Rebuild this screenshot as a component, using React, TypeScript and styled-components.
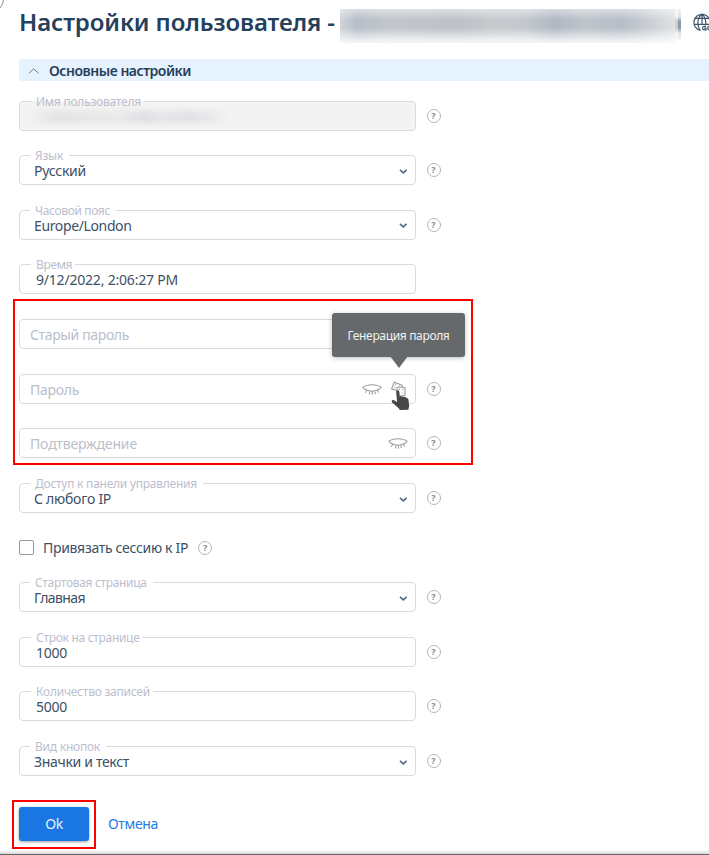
import React from "react";
import styled, { createGlobalStyle, css } from "styled-components";

const GlobalStyle = createGlobalStyle`
  * { box-sizing: border-box; }
  body { margin: 0; background: #fff; overflow: hidden; }
`;

const Page = styled.main`
  position: relative;
  display: flex;
  flex-direction: column;
  height: 855px;
  padding: 9px 0 0 19px;
  overflow: hidden;
  background: #fff;
  color: #3c5066;
  font: 400 14px/20px "Noto Sans", "Open Sans", sans-serif;
`;

const CornerRing = styled.span`
  position: absolute;
  left: -21px;
  top: -13px;
  width: 25px;
  height: 25px;
  border: 1px solid #8b8b8b;
  border-radius: 50%;
`;

const BottomEdge = styled.span`
  position: absolute;
  left: 0;
  right: 0;
  bottom: 0;
  height: 5px;
  border-bottom: 1px solid #626262;
  background: linear-gradient(#fff, #d8d8d8);
`;

const Text = styled.span<{ $track?: number }>`
  letter-spacing: ${(p) => p.$track ?? -0.3}px;
  white-space: pre;
`;

const Header = styled.header`
  display: flex;
  height: 34px;
  width: 690px;
  flex: none;
`;

const Title = styled.h1`
  margin: -1px 0 0;
  width: 321px;
  flex: none;
  color: #24405a;
  font-size: 24px;
  font-weight: 600;
  line-height: 28px;
`;

const HiddenName = styled.span`
  width: 335px;
  height: 34px;
  flex: none;
  background:
    linear-gradient(#fff7 0, #fff0 32%, #fff0 55%, #fffc 95%),
    linear-gradient(90deg, #d0d4d9, #b7bec8 5%, #c2c7cd 14%, #bfc4ca 25%, #bdc2c8 36%, #c5cace 45%, #c4c9cf 55%, #b0b8c3 64%, #bec4cb 73%, #b7bec8 84%, #c9ced3 92%, #dfe2e5);
`;

const HiddenTail = styled.span`
  width: 6px;
  height: 31px;
  flex: none;
  background:
    linear-gradient(90deg, #fff8 50%, #fff0 50%),
    linear-gradient(#eff0f1, #e2e5e7 25%, #8c99a7 40%, #8c99a7 60%, #e3e6e8 78%, #f3f3f3);
`;

const GlobeSlot = styled.span`
  margin: 4px 0 0 12px;
  width: 20px;
  height: 20px;
  flex: none;
`;

const SectionBar = styled.button`
  display: flex;
  align-items: center;
  gap: 9px;
  flex: none;
  height: 22px;
  margin: 16px 0 19.6px;
  padding: 1px 0 0 9px;
  border: 0;
  border-radius: 2px 0 0 2px;
  background: #e7f2ff;
  color: #253f59;
  font: 600 14px/21px "Noto Sans", sans-serif;
`;

const Row = styled.div`
  display: flex;
  align-items: center;
  gap: 10.5px;
  height: 30px;
  flex: none;
  & + & { margin-top: 24.6px; }
`;

const Control = styled.div<{ $disabled?: boolean; $select?: boolean }>`
  position: relative;
  display: flex;
  align-items: center;
  width: 397px;
  height: 30px;
  padding: 2px 7px 0 ${(p) => (p.$select ? 14 : 16)}px;
  border: 1px solid #d8dadb;
  border-radius: 4px;
  background: ${(p) => (p.$disabled ? "#f3f3f3" : "#fff")};
`;

const FloatLabel = styled.label<{ $disabled?: boolean; $select?: boolean }>`
  position: absolute;
  left: ${(p) => (p.$select ? 10 : 11)}px;
  top: -8px;
  padding: 0 ${(p) => (p.$select ? 6 : 3)}px 0 5px;
  color: #bbbecd;
  font-size: 12px;
  line-height: 15px;
  background: ${(p) => (p.$disabled ? "linear-gradient(#fff 50%, #f3f3f3 50%)" : "#fff")};
`;

const Placeholder = styled.span`
  margin-left: -6px;
  color: #bbbecb;
`;

const Blurred = styled.span`
  width: 197px;
  height: 20px;
  margin: 1px 0 0 -5px;
  background: linear-gradient(90deg, #f1f1f2, #e3e4e6 12%, #e8e8ea 30%, #e9eaeb 44%, #e0e1e4 58%, #e6e7e9 66%, #e2e3e6 80%, #eaeaec 93%, #f2f2f2);
  mask-image: linear-gradient(transparent, #000 35%, #000 65%, transparent);
`;

const Trailing = styled.span`
  display: flex;
  align-items: center;
  gap: 8px;
  margin: 0 0 0 auto;
`;

const HelpMark = styled.span`
  display: flex;
  align-items: center;
  justify-content: center;
  width: 14px;
  height: 14px;
  flex: none;
  border: 1px solid #b6b6b6;
  border-radius: 50%;
  color: #8a8a8a;
  font: 700 9px/12px "Noto Sans", sans-serif;
`;

const highlight = css`
  border: 2px solid #ff0000;
  flex: none;
`;

const PasswordGroup = styled.section`
  ${highlight}
  width: 460px;
  height: 166px;
  margin: 4.9px 0 18px -6px;
  padding: 18px 0 0 4px;
`;

const DiceButton = styled.span`
  position: relative;
  display: flex;
  width: 18px;
  height: 18px;
`;

const Tooltip = styled.span`
  position: absolute;
  z-index: 2;
  left: -58px;
  bottom: 42px;
  width: 133px;
  height: 44px;
  border-radius: 3px;
  background: #66696c;
  box-shadow: 0 1px 5px #53606f66;
  color: #f1f1f1;
  font-size: 12px;
  line-height: 45px;
  text-align: center;
  &::after {
    content: "";
    position: absolute;
    left: 58px;
    top: 43px;
    border: 9px solid transparent;
    border-top: 12px solid #66696c;
    border-bottom: 0;
  }
`;

const HandCursor = styled.svg`
  position: absolute;
  z-index: 3;
  left: 1px;
  top: 9px;
`;

const CheckRow = styled.div`
  display: flex;
  align-items: center;
  height: 20px;
  flex: none;
  margin: 25px 0 24px;
`;

const CheckBox = styled.span`
  width: 15px;
  height: 15px;
  margin: -1px 9px 0 0;
  border: 1px solid #989898;
  border-radius: 2px;
`;

const CheckHelp = styled.span`
  margin-left: 10px;
`;

const Actions = styled.footer`
  display: flex;
  align-items: center;
  gap: 12px;
  flex: none;
  margin: 23.5px 0 0 -7px;
`;

const OkFrame = styled.span`
  ${highlight}
  width: 84px;
  height: 49px;
  padding: 5px 0 0 5px;
`;

const OkButton = styled.button`
  display: block;
  width: 70px;
  height: 34px;
  padding: 1px 0 0;
  border: 0;
  border-radius: 3px;
  background: #1976e3;
  box-shadow: 0 1px 3px #0006;
  color: #e5f0ff;
  font: 400 14px/20px "Noto Sans", sans-serif;
`;

const CancelLink = styled.a`
  color: #237ce5;
`;

const Globe = () => (
  <svg width="20" height="20" viewBox="0 0 20 20" fill="none" stroke="#3d556c" strokeWidth="1.2">
    <path d="M7.600 17.400A8.100 8.100 0 1 1 17 10.700M9 1.100C3.800 5 3.800 12.800 7.300 17.300M9 1.100c2.800 2.500 4 6 3.900 10.200M2.200 5.300h13.600M1 11.400h15.300M9 1.100v10.500" />
    <path d="M13 13.300h-2.200a1.900 1.900 0 0 0 0 3.600H13v-1.800h-1.800M18.500 13.300h-2a1.800 1.800 0 0 0 0 3.600h2v-1.800H17" />
  </svg>
);

const CollapseIcon = () => (
  <svg width="12" height="8" viewBox="0 0 12 8" fill="none" stroke="#6c8095" strokeWidth="1">
    <path d="M1 6.300 5.700 1.800 10.500 6.300" />
  </svg>
);

const SelectArrow = () => (
  <svg width="9" height="7" viewBox="0 0 9 7" fill="none" stroke="#586b7e" strokeWidth="1.7">
    <path d="M1 1.800 4.300 4.800 7.600 1.800" />
  </svg>
);

const ClosedEye = () => (
  <svg width="20" height="16" viewBox="0 0 20 16" fill="none" stroke="#999" strokeWidth="1.05">
    <path d="M1 5.200C5 2 15 2 19 5.200c-.7 1.500-4 4-9 4S1.700 6.800 1 5.200ZM4.800 8.300l-1.500 2.400M8 9l-.7 3.500M10.300 9.200v3.600M12.700 9l.8 3.200M15.200 8.200l1.500 2.300" />
  </svg>
);

const Dice = () => (
  <svg width="18" height="18" viewBox="0 0 18 18" fill="none" stroke="#999" strokeWidth="1.1">
    <path d="M6.500 9.500 1.600 7.800 4.300 1.200l8 3.100-.6 2" />
    <rect x="7" y="6.300" width="8" height="8.500" rx=".8" fill="#fff" />
    <path d="M5 3.800h1M9 5h1M4.400 6.700h1M9 8.400h1M12.300 8.400h1M12.300 12.200h1M9 12.200h1" />
  </svg>
);

const Hand = () => (
  <HandCursor width="20" height="21" viewBox="0 0 20 21" fill="#474747">
    <path d="M5.300 1.500c0-1.700 2.700-1.700 2.900 0l.5 5.100c.5-.9 2-.8 2.300.3.700-.9 2-.5 2.300.6.800-.8 2.100-.3 2.300.8.900-.4 1.600.2 1.800 1.100l.8 6.300-.9 4-8.500.4c-.6-1.900-2.800-3.600-4.800-5.200C2.200 13.600 0 11.800 1 10.500c1-1.200 3.700.7 5 1.800Z" />
  </HandCursor>
);

const Help = () => <HelpMark>?</HelpMark>;

type FieldProps = {
  label: string;
  track?: number;
  value?: string;
  valueTrack?: number;
  select?: boolean;
  disabled?: boolean;
  help?: boolean;
};

const Field = ({ label, track, value, valueTrack, select, disabled, help = true }: FieldProps) => (
  <Row>
    <Control $disabled={disabled} $select={select}>
      <FloatLabel $disabled={disabled} $select={select}>
        <Text $track={track}>{label}</Text>
      </FloatLabel>
      {disabled ? <Blurred /> : <Text $track={valueTrack}>{value}</Text>}
      {select && <Trailing><SelectArrow /></Trailing>}
    </Control>
    {help && <Help />}
  </Row>
);

type PasswordProps = { label: string; track?: number; help?: boolean; children?: React.ReactNode };

const PasswordField = ({ label, track, help = true, children }: PasswordProps) => (
  <Row>
    <Control>
      <Placeholder><Text $track={track}>{label}</Text></Placeholder>
      <Trailing>{children}</Trailing>
    </Control>
    {help && <Help />}
  </Row>
);

export default function App() {
  return (
    <Page>
      <GlobalStyle />
      <CornerRing />
      <Header>
        <Title><Text $track={-0.1}>Настройки пользователя -</Text></Title>
        <HiddenName />
        <HiddenTail />
        <GlobeSlot><Globe /></GlobeSlot>
      </Header>
      <SectionBar>
        <CollapseIcon />
        <Text $track={-0.48}>Основные настройки</Text>
      </SectionBar>
      <Field label="Имя пользователя" track={-0.23} disabled />
      <Field label="Язык" track={-0.2} value="Русский" valueTrack={-0.24} select />
      <Field label="Часовой пояс" track={-0.36} value="Europe/London" valueTrack={-0.37} select />
      <Field label="Время" track={-0.35} value="9/12/2022, 2:06:27 PM" valueTrack={-0.2} help={false} />
      <PasswordGroup>
        <PasswordField label="Старый пароль" track={-0.36} help={false} />
        <PasswordField label="Пароль" track={-0.28}>
          <ClosedEye />
          <DiceButton>
            <Dice />
            <Hand />
            <Tooltip><Text $track={-0.34}>Генерация пароля</Text></Tooltip>
          </DiceButton>
        </PasswordField>
        <PasswordField label="Подтверждение" track={-0.15}>
          <ClosedEye />
        </PasswordField>
      </PasswordGroup>
      <Field label="Доступ к панели управления" track={-0.25} value="С любого IP" valueTrack={-0.25} select />
      <CheckRow>
        <CheckBox />
        <Text $track={-0.31}>Привязать сессию к IP</Text>
        <CheckHelp><Help /></CheckHelp>
      </CheckRow>
      <Field label="Стартовая страница" track={-0.33} value="Главная" valueTrack={-0.58} select />
      <Field label="Строк на странице" track={-0.3} value="1000" valueTrack={-0.25} />
      <Field label="Количество записей" track={-0.24} value="5000" valueTrack={-0.25} />
      <Field label="Вид кнопок" track={-0.23} value="Значки и текст" valueTrack={-0.32} select />
      <Actions>
        <OkFrame><OkButton><Text $track={-0.5}>Ok</Text></OkButton></OkFrame>
        <CancelLink><Text $track={-0.33}>Отмена</Text></CancelLink>
      </Actions>
      <BottomEdge />
    </Page>
  );
}
